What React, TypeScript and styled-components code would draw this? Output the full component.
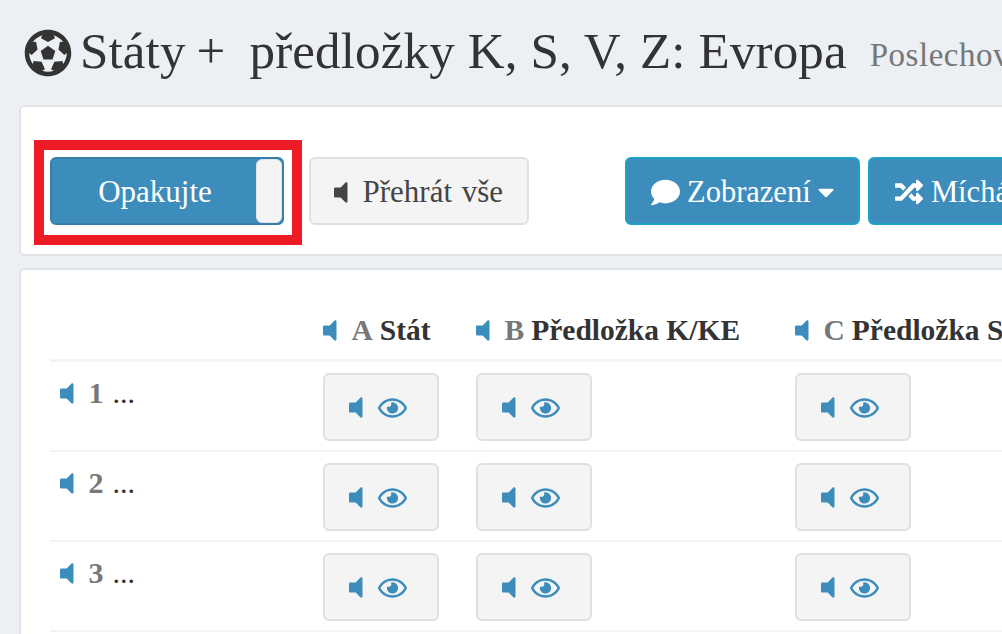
import { createGlobalStyle } from "styled-components";
import styled from "styled-components";
import { FaCaretDown, FaComment, FaFutbol, FaRandom, FaRegEye, FaVolumeOff } from "react-icons/fa";

const GlobalStyle = createGlobalStyle`
    html, body {
        margin: 0;
        height: 100%;
        overflow: hidden;
        background: #eceff4;
        font-family: "Liberation Serif", serif;
        color: #333;
    }
`

const Page = styled.div`
    width: 1002px;
    height: 634px;
    overflow: hidden;
    white-space: nowrap;
`

const Header = styled.header`
    height: 105px;
    display: flex;
    align-items: flex-start;
    padding: 19px 0 0 24px;
    box-sizing: border-box;
`

const Title = styled.h1`
    margin: 0;
    font-size: 51px;
    line-height: 54px;
    font-weight: 400;
    letter-spacing: 0.15px;
    display: flex;
    align-items: center;
    color: #333;
    svg {
        width: 48px;
        height: 48px;
        margin: 5px 8px 0 0;
    }
`

const Plus = styled.span`
    margin: 0 24px 0 11px;
`

const Small = styled.small`
    font-size: 33px;
    letter-spacing: 0.5px;
    color: #777;
    margin-left: 23px;
    padding-top: 9px;
`

const Card = styled.section`
    position: relative;
    width: 1200px;
    margin-left: 19px;
    background: #fff;
    border: 2px solid #e1e3e6;
    border-radius: 6px;
    box-sizing: border-box;
`

const Toolbar = styled(Card)`
    height: 151px;
    margin-bottom: 12px;
    padding: 50px 29px 0;
    display: flex;
    align-items: flex-start;
`

const Highlight = styled.div`
    position: absolute;
    left: 13px;
    top: 33px;
    width: 268px;
    height: 105px;
    border: 10px solid #ed1c24;
    box-sizing: border-box;
    pointer-events: none;
`

const Toggle = styled.div`
    width: 234px;
    height: 68px;
    box-sizing: border-box;
    display: flex;
    background: #3c8dbc;
    border: 2px solid #367fa9;
    border-radius: 6px;
    overflow: hidden;
`

const ToggleLabel = styled.span`
    flex: 1;
    display: flex;
    align-items: center;
    justify-content: center;
    color: #fff;
    font-size: 31px;
    padding: 2px 0 0 2px;
`

const ToggleKnob = styled.span`
    width: 26px;
    background: #f4f4f4;
    border: 1px solid #dfe3e6;
    box-sizing: border-box;
    border-radius: 6px;
`

const Button = styled.button<{ $width: number; $gap: number; $primary?: boolean }>`
    flex: none;
    width: ${(p) => p.$width}px;
    height: 68px;
    margin-left: ${(p) => p.$gap}px;
    box-sizing: border-box;
    display: flex;
    align-items: center;
    padding: 2px 0 0;
    font-family: inherit;
    font-size: 30.5px;
    border-radius: 6px;
    color: ${(p) => (p.$primary ? "#fff" : "#444")};
    background: ${(p) => (p.$primary ? "#3c8dbc" : "#f4f4f4")};
    border: 2px solid ${(p) => (p.$primary ? "#1ea2c8" : "#e0e0e0")};
`

const PlayAll = styled(Button)`
    padding-left: 23px;
    gap: 15px;
    font-size: 31px;
    word-spacing: 2px;
    svg {
        width: 13.5px;
        height: 27px;
    }
`

const MenuButton = styled(Button)`
    padding-left: 24px;
    gap: 7px;
`

const ChatIcon = styled(FaComment)`
    width: 29px;
    height: 29px;
`

const CaretIcon = styled(FaCaretDown)`
    width: 16px;
    height: 26px;
`

const ShuffleIcon = styled(FaRandom)`
    width: 30px;
    height: 28px;
`

const Table = styled(Card)`
    height: 400px;
    padding: 0 29px;
`

const Row = styled.div<{ $head?: boolean }>`
    display: grid;
    grid-template-columns: 273px 153px 319px 300px 300px;
    height: ${(p) => (p.$head ? "92px" : "90px")};
    box-sizing: border-box;
    border-bottom: ${(p) => (p.$head ? "3px solid #f4f4f4" : "2px solid #f4f4f4")};
`

const HeadCell = styled.div`
    display: flex;
    align-items: center;
    align-self: end;
    height: 30px;
    margin-bottom: 14px;
    font-size: 29.5px;
    font-weight: 700;
    color: #333;
`

const Letter = styled.span`
    color: #777;
    margin: 0 7px 0 15px;
`

const Speaker = styled(FaVolumeOff)`
    flex: none;
    width: 13.5px;
    height: 27px;
    color: #3c8dbc;
`

const RowLabel = styled.div`
    display: flex;
    align-items: center;
    align-self: start;
    height: 30px;
    margin-top: 16px;
    padding-left: 10px;
    font-size: 30px;
    font-weight: 700;
    color: #777;
`

const RowNumber = styled.span`
    margin-left: 15px;
`

const Dots = styled.span`
    color: #333;
    font-weight: 400;
    margin-left: 9px;
`

const RevealButton = styled.button`
    width: 116px;
    height: 68px;
    margin-top: 11px;
    box-sizing: border-box;
    display: flex;
    align-items: center;
    justify-content: center;
    gap: 15px;
    padding: 1px 6px 0 0;
    background: #f4f4f4;
    border: 2px solid #e0e0e0;
    border-radius: 6px;
    color: #3c8dbc;
    svg:last-child {
        width: 29px;
        height: 26px;
    }
`

const columns = ["Stát", "Předložka K/KE", "Předložka S/SE", "Předložka V/VE"];
const letters = ["A", "B", "C", "D"];

function Reveal() {
    return (
        <RevealButton>
            <Speaker />
            <FaRegEye />
        </RevealButton>
    );
}

export default function App() {
    return (
        <Page>
            <GlobalStyle />
            <Header>
                <Title>
                    <FaFutbol />
                    Státy<Plus>+</Plus>předložky K, S, V, Z: Evropa
                    <Small>Poslechové cvičení</Small>
                </Title>
            </Header>
            <Toolbar>
                <Toggle>
                    <ToggleLabel>Opakujte</ToggleLabel>
                    <ToggleKnob />
                </Toggle>
                <PlayAll $width={220} $gap={25}>
                    <FaVolumeOff />
                    Přehrát vše
                </PlayAll>
                <MenuButton $width={235} $gap={96} $primary>
                    <ChatIcon />
                    Zobrazení
                    <CaretIcon />
                </MenuButton>
                <MenuButton $width={220} $gap={8} $primary>
                    <ShuffleIcon />
                    Míchání
                </MenuButton>
                <Highlight />
            </Toolbar>
            <Table>
                <Row $head>
                    <div />
                    {columns.map((name, i) => (
                        <HeadCell key={name}>
                            <Speaker />
                            <Letter>{letters[i]}</Letter>
                            {name}
                        </HeadCell>
                    ))}
                </Row>
                {[1, 2, 3].map((n) => (
                    <Row key={n}>
                        <RowLabel>
                            <Speaker />
                            <RowNumber>{n}</RowNumber>
                            <Dots>...</Dots>
                        </RowLabel>
                        <Reveal />
                        <Reveal />
                        <Reveal />
                    </Row>
                ))}
            </Table>
        </Page>
    );
}
